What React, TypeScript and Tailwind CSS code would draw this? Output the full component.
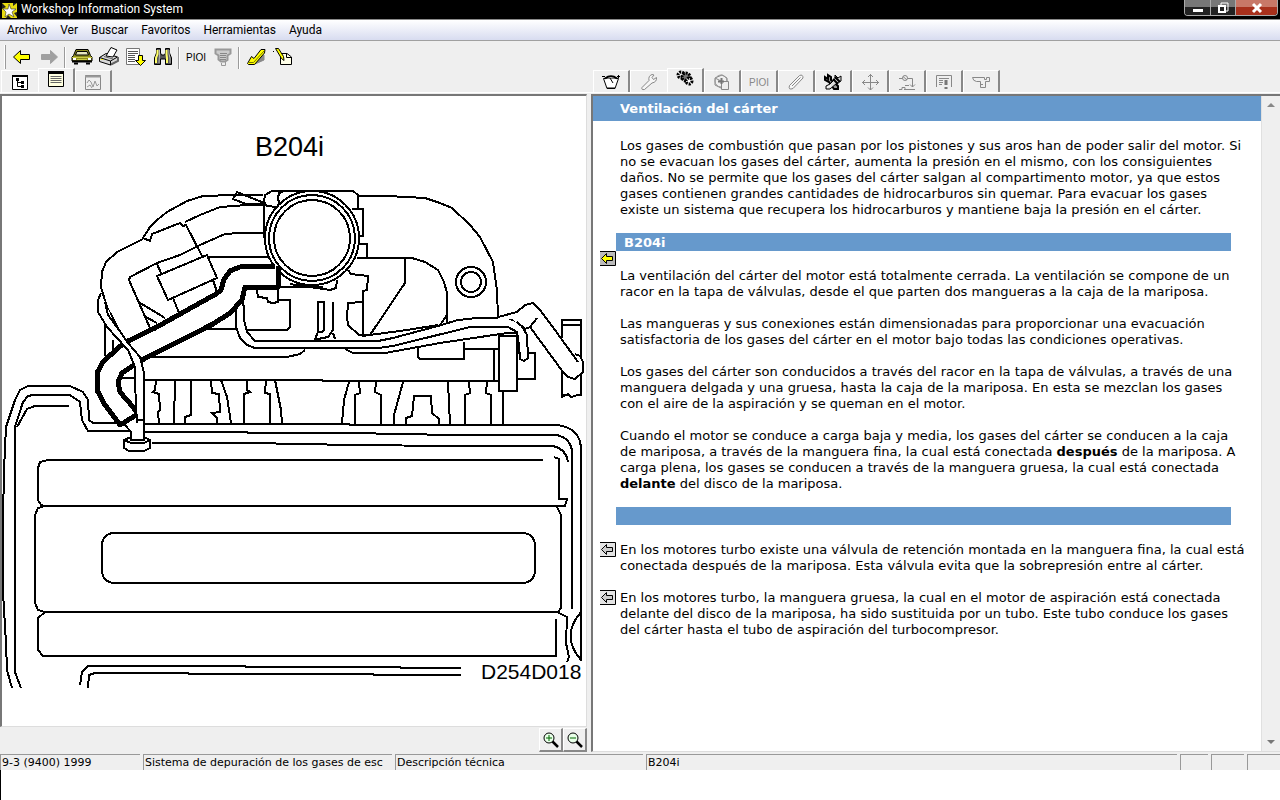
import { useState } from 'react';
import type { ReactNode } from 'react';

interface IconItem {
  title: string;
  icon: ReactNode;
}

const menuItems = ['Archivo', 'Ver', 'Buscar', 'Favoritos', 'Herramientas', 'Ayuda'];

function Icon({ children }: { children: ReactNode }) {
  return (
    <svg viewBox="0 0 22 20" className="h-5 w-[22px] shrink-0" fill="none" stroke="#000" strokeWidth="1">
      {children}
    </svg>
  );
}

function Pioi({ color }: { color: string }) {
  return (
    <Icon>
      <text x="11" y="14" textAnchor="middle" fontSize="10" fill={color} stroke="none" className="font-['Liberation_Sans',sans-serif]">
        PIOI
      </text>
    </Icon>
  );
}

const navTools: IconItem[] = [
  {
    title: 'Atrás',
    icon: (
      <Icon>
        <path d="M2.500 10 9.500 3.500V7.500H18.500V12.500H9.500V16.500Z" fill="#ff0" />
      </Icon>
    ),
  },
  {
    title: 'Adelante',
    icon: (
      <Icon>
        <path d="M19.500 10 12.500 3.500V7.500H3.500V12.500H12.500V16.500Z" fill="#a0a0a0" stroke="#a0a0a0" />
      </Icon>
    ),
  },
];

const docTools: IconItem[] = [
  {
    title: 'Vehículo',
    icon: (
      <Icon>
        <path d="M5 2.500H17L19.500 8.500 21 10V14H1V10L2.500 8.500Z" fill="#8c8c1e" />
        <path d="M6 4.500H16L17.500 8H4.500Z" fill="#e8e8c0" />
        <path d="M1 10.500H21M6 12.500H16" stroke="#cc4" />
        <path d="M1 14.500H21" strokeWidth="2" />
        <path d="M3 16.500H7M15 16.500H19" strokeWidth="2" />
        <path d="M2 12H5M17 12H20" stroke="#fff" strokeWidth="2" />
      </Icon>
    ),
  },
  {
    title: 'Imprimir',
    icon: (
      <Icon>
        <path d="M1.500 10.500 8 6.500 19.500 10V14L12.500 18 1.500 14.500Z" fill="#d8d8d8" />
        <path d="M1.500 10.500 12.500 14 19.500 10M12.500 14V18" />
        <path d="M8 9 13 .5 19 3 15 10Z" fill="#fff" />
        <path d="M6 9.500 15 12" stroke="#666" />
        <path d="M13 17.500 20 14V10" stroke="#666" strokeWidth="2" />
        <path d="M3 12.500H5" stroke="#ff0" />
      </Icon>
    ),
  },
  {
    title: 'Descargar lista',
    icon: (
      <Icon>
        <path d="M1.500 1.500H14.500V17.500H1.500Z" fill="#fff" stroke="#777" />
        <path d="M3 4.500H13M3 6.500H13M3 8.500H10M3 10.500H10M3 12.500H10M3 14.500H10" stroke="#555" />
        <path d="M13.500 8.500H17.500V13.500H20.500L15.500 18.500 10.500 13.500H13.500Z" fill="#ff0" />
      </Icon>
    ),
  },
  {
    title: 'Buscar',
    icon: (
      <Icon>
        <path d="M4.500 1.500H8.500V6L9.500 8H12.500L13.500 6V1.500H17.500V6L19.500 11V17.500H13.500V12H8.500V17.500H2.500V11L4.500 6Z" fill="#555" />
        <path d="M5.500 3V7L4 11V16M14.500 3V7L15 11V16" stroke="#ff6" strokeWidth="2" />
        <path d="M7.500 3V7L7 16M17 3V7L18 11V16" stroke="#bbb" />
      </Icon>
    ),
  },
];

const linkTools: IconItem[] = [
  { title: 'PIOI', icon: <Pioi color="#000" /> },
  {
    title: 'Teléfono',
    icon: (
      <Icon>
        <path d="M3.500 2.500H18.500V6.500L15.500 8.500V13L13 14.500H9L6.500 12.500V8.500L3.500 6.500Z" fill="#ccc" stroke="#999" strokeWidth="2" />
        <path d="M8 6.500H15M8 8.500H14M8 10.500H14M8 12.500H14" stroke="#888" />
        <path d="M13.500 15V18.500H9.500V16" stroke="#999" />
      </Icon>
    ),
  },
];

const noteTools: IconItem[] = [
  {
    title: 'Marcador',
    icon: (
      <Icon>
        <path d="M10 17 19 13V8Z" fill="#888" stroke="#888" />
        <path d="M2.500 16.500 6.500 9.500 9 11.500 16 2.500H20L19.500 6 9.500 17.500H3.500Z" fill="#ff0" />
        <path d="M3.500 15.500H8.500L19 4" stroke="#770" />
      </Icon>
    ),
  },
  {
    title: 'Nota',
    icon: (
      <Icon>
        <path d="M8.500 6.500H15L19.500 10V17.500H8.500Z" fill="#ffffe8" />
        <path d="M14.500 6.500V10.500H19.500" />
        <path d="M3.500 1.500H6.500L11.500 9.500 12 13.500 9.500 11.500Z" fill="#ff0" />
        <path d="M1 4.500H2" />
      </Icon>
    ),
  },
];

const leftTabs: IconItem[] = [
  {
    title: 'Árbol',
    icon: (
      <Icon>
        <path d="M3.500 3.500H18.500V17.500H3.500Z" fill="#fff" />
        <path d="M3 4H19" strokeWidth="2" />
        <path d="M8.500 8V14.500H12M8.500 10.500H12" />
        <path d="M7 7.500H10M12 10.500H15M12 14.500H15" strokeWidth="3" />
      </Icon>
    ),
  },
  {
    title: 'Texto',
    icon: (
      <Icon>
        <path d="M3.500 2.500H18.500V17.500H3.500Z" fill="#ffffe0" />
        <path d="M3 3.500H19" strokeWidth="3" />
        <path d="M5.500 7.500H16.500M5.500 9.500H16.500M5.500 11.500H16.500M5.500 13.500H16.500" stroke="#666" />
      </Icon>
    ),
  },
  {
    title: 'Diagrama',
    icon: (
      <Icon>
        <path d="M3.500 3.500H18.500V17.500H3.500Z" stroke="#888" />
        <path d="M3 4.500H19" stroke="#999" strokeWidth="2" />
        <path d="M5 11 7 8 9 10 11 15 13 9 15 14 17 12M5 15 8 13 10 16" stroke="#999" />
      </Icon>
    ),
  },
];

const rightTabs: IconItem[] = [
  {
    title: 'Datos técnicos',
    icon: (
      <Icon>
        <path d="M3.500 6.500 7 16.500H15L18.500 6.500Z" fill="#fff" />
        <path d="M5 6.500Q11 2 17 6.500" fill="#fff" strokeWidth="2" />
        <path d="M2 4.500H5M17 4.500H20M18.500 3V6M10 6 13 11M7 16H15" />
      </Icon>
    ),
  },
  {
    title: 'Reparación',
    icon: (
      <Icon>
        <path
          d="M4 15.500 11 8.500Q10 4 14 2.500L16 3 14 5.500 15.500 7.500 18.500 5.500Q19 10 14 11L6.500 17.500Q3 18 4 15.500Z"
          fill="#f6f6f6"
          stroke="#888"
        />
      </Icon>
    ),
  },
  {
    title: 'Descripción técnica',
    icon: (
      <Icon>
        <circle cx="7" cy="6" r="3" strokeWidth="3" strokeDasharray="2 1" />
        <circle cx="12" cy="8" r="4" fill="#777" strokeWidth="3" strokeDasharray="2 1" />
        <circle cx="15" cy="12" r="3" fill="#fff" strokeWidth="3" strokeDasharray="2 1" />
      </Icon>
    ),
  },
  {
    title: 'Recambios',
    icon: (
      <Icon>
        <path d="M4 6 11 3 16 6V9M4 6V13L10 16M4 6 10 9" stroke="#888" />
        <circle cx="10" cy="9" r="6" stroke="#999" />
        <path d="M10.500 9.500H17.500V17.500H10.500Z" fill="#eee" stroke="#888" />
        <path d="M7 9.500H13M10.500 6V12" stroke="#777" strokeWidth="2" />
      </Icon>
    ),
  },
  { title: 'Códigos', icon: <Pioi color="#888" /> },
  {
    title: 'Medición',
    icon: (
      <Icon>
        <path d="M4.500 13.500 14.500 3.500Q18 2 18 6L8 16.500Q3 18.500 4.500 13.500Z" fill="#f6f6f6" stroke="#888" />
        <path d="M7 14 15.500 5.500" stroke="#888" />
      </Icon>
    ),
  },
  {
    title: 'Herramientas',
    icon: (
      <Icon>
        <path d="M3 5 6 7V3L9 5V8L16 14V17H12L7 10 3 8Z" fill="#999" strokeWidth="2" />
        <path d="M4 14 8 12 13 7V3L16 6 19 4V9L15 11 8 17 4 17Z" fill="#ddd" />
        <path d="M11 7 16 12M13 5 18 10" strokeWidth="2" />
        <path d="M5 15.500 9 13.500" stroke="#fff" />
      </Icon>
    ),
  },
  {
    title: 'Desplazar',
    icon: (
      <Icon>
        <path d="M11.500 2V18M3 10.500H20M9 5 11.500 2.500 14 5M9 15.500 11.500 18 14 15.500M6 8 3.500 10.500 6 13M17 8 19.500 10.500 17 13" stroke="#888" />
      </Icon>
    ),
  },
  {
    title: 'Esquemas',
    icon: (
      <Icon>
        <circle cx="9" cy="6" r="2.500" stroke="#888" />
        <path d="M3 6.500H6.500M11.500 6.500H16.500V15M14 12.500 16.500 15 19 12.500M9 13.500H13M8 17.500H19M3 17.500H6V15.500H9V17.500M7 4.500 11 8" stroke="#888" />
      </Icon>
    ),
  },
  {
    title: 'Avisos',
    icon: (
      <Icon>
        <path d="M3.500 15V3.500H18.500V15" stroke="#888" />
        <path d="M6 6.500H16M6 8.500H10M6 10.500H10M6 12.500H9" stroke="#888" />
        <path d="M13 8V13M13 15V17" stroke="#777" strokeWidth="3" />
      </Icon>
    ),
  },
  {
    title: 'Boletines',
    icon: (
      <Icon>
        <path d="M2.500 5.500H14.500V7.500H16.500V5.500H19.500V9.500H15.500V15.500H10.500V9.500H6.500Q3 9 2.500 5.500Z" stroke="#888" />
        <path d="M10.500 12.500H13" stroke="#888" />
      </Icon>
    ),
  },
];

function ToolGroup({ items }: { items: IconItem[] }) {
  return (
    <>
      {items.map((item) => (
        <button key={item.title} aria-label={item.title} className="flex h-6 w-[27px] items-center justify-center">
          {item.icon}
        </button>
      ))}
    </>
  );
}

function Separator() {
  return <div className="mx-[2px] h-[22px] w-[2px] border-l border-[#9a9a9a] bg-white" />;
}

interface TabStripProps {
  tabs: IconItem[];
  initial: number;
  className: string;
}

function TabStrip({ tabs, initial, className }: TabStripProps) {
  const [active, setActive] = useState(initial);

  return (
    <div role="tablist" className={`flex h-6 items-end border-b border-white ${className}`}>
      {tabs.map((tab, index) => (
        <button
          key={tab.title}
          role="tab"
          aria-label={tab.title}
          aria-selected={index === active}
          onClick={() => setActive(index)}
          className={`flex w-[37px] items-center justify-center border-t border-l border-white ${
            index === active ? 'h-6 border-r-2 border-r-[#777] pb-1' : 'h-[22px]'
          } ${index === active - 1 ? '' : 'border-r-2 border-r-[#888]'}`}
        >
          {tab.icon}
        </button>
      ))}
    </div>
  );
}

function TitleBar() {
  return (
    <header className="flex h-5 items-start justify-between border-b border-[#8a8a8a] bg-black pl-[2px]">
      <div className="flex items-center gap-1">
        <svg viewBox="0 0 15 16" className="h-4 w-[15px]">
          <path d="M0 1H15V16H0Z" fill="#e8dc10" />
          <path d="M0 1 4 5 0 7ZM11 1 11 4 15 1ZM15 10 12 11 15 15ZM4 16 6 13 9 16Z" fill="#222" />
          <path d="M7 2 9 7 14 7 10 10 12 15 7 12 3 15 4 10 1 7 6 7Z" fill="#fff" stroke="#333" strokeWidth=".6" />
        </svg>
        <h1 className="font-[Roboto,sans-serif] text-[12px] leading-[19px] text-white">Workshop Information System</h1>
      </div>
      <div className="mr-[2px] flex h-4 overflow-hidden rounded-b-[4px] border border-t-0 border-[#aaa]">
        <button aria-label="Minimizar" className="flex w-[25px] items-center justify-center bg-linear-to-b from-[#777] from-50% to-[#222] to-50%">
          <svg viewBox="0 0 12 12" className="size-3">
            <path d="M1 7H11V10H1Z" fill="#fff" />
          </svg>
        </button>
        <button aria-label="Restaurar" className="flex w-[25px] items-center justify-center border-l border-[#aaa] bg-linear-to-b from-[#777] from-50% to-[#222] to-50%">
          <svg viewBox="0 0 12 12" className="size-3" fill="none" stroke="#fff">
            <path d="M4 3V1H11V9H9" />
            <path d="M2 4H8V10H2Z" strokeWidth="2" />
          </svg>
        </button>
        <button aria-label="Cerrar" className="flex w-[42px] items-center justify-center border-l border-[#aaa] bg-linear-to-b from-[#c87868] from-50% to-[#a8301c] to-50%">
          <svg viewBox="0 0 12 12" className="size-3" stroke="#fff" strokeWidth="3">
            <path d="M2 2 10 10M10 2 2 10" />
          </svg>
        </button>
      </div>
    </header>
  );
}

function EngineDrawing() {
  return (
    <svg
      viewBox="2 96 584 630"
      preserveAspectRatio="xMinYMin meet"
      className="block w-full"
      fill="none"
      stroke="#000"
      strokeWidth="2"
      shapeRendering="crispEdges"
      role="img"
      aria-label="B204i"
    >
      {/* intake manifold */}
      <path d="M143 238 150 227 157 220 167 212 187 201 203 196 233 195H263" />
      <path d="M264 203 237 192 233 199 246 204H264" />
      <path d="M185 222 200 215 220 207 247 205H264V238M264 233H240L225 234 200 245 180 255 157 263 130 277 129 280 150 328" />
      <path d="M143 238 150 241 152 234 180 223 183 226 186 225 202 256" />
      <path d="M143 239 117 252 106 262 102 272 101 287 107 307 119 330" />
      <path d="M157 276 207 255 217 278 168 300ZM157 264 161 273M173 298 179 313M213 280 217 292M137 301 165 318M144 316 157 323M209 257H269" />
      <path d="M358 196H387L425 198 440 203 452 208 470 225 480 237 493 262 497 290 498 318" />
      <path d="M357 258H412L425 262 438 270 444 282 447 293V323M405 258V283L370 335M447 315 440 325" />
      <circle cx="471" cy="282" r="15" />
      <circle cx="471" cy="282" r="10" />
      {/* throttle body */}
      <path d="M277 207 267 206 264 202 265 195 272 191H353L358 195V209M283 192 279 193 278 198 279 203 277 207" />
      <path d="M352 209H363V236H359M359 244H367V258" />
      <path d="M278 287H323M290 284 330 290 336 288 337 280M348 270 351 274 368 276 367 290 363 291V302L348 303 347 317 348 325 359 335H370M363 302V335" />
      <circle cx="312" cy="238" r="47" fill="#fff" />
      <circle cx="312" cy="238" r="43" />
      <circle cx="312" cy="238" r="38" />
      <path d="M257 290 258 297 267 298 268 302 273 303 278 302 279 300H290V327L287 330H247L243 323V300M278 288V301" />
      <path d="M318 339 315 339 318 332V302H324V330L322 332H318M333 302V330L328 337 318 339M333 333 335 339" />
      {/* fuel rail */}
      <path d="M152 357H287L300 354 305 350M203 329H236M143 380H322L323 381H499M120 378H135" />
      <path d="M418 348V357L420 359H464V342M464 349H499M494 350V381M499 336H517V391H499ZM503 391V424" />
      <path d="M517 353H535V379H517" />
      <path
        d="M236 308V327L240 338 247 345 255 348H378L393 346 470 327H508L517 332 519 345 520 359 524 361 528 358 527 335 520 323 508 318H477L458 320 438 326 393 338 378 341H255L247 332 244 320V305"
        fill="#fff"
      />
      <path d="M362 336 407 330 438 325M345 349 353 353H385L440 343 507 333H517" />
      {/* cylinder head supports */}
      <path d="M156 380 155 390 153 392 159 394 160 410 158 412 159 423M175 380 174 423M191 380V415L185 417V423" />
      <path d="M211 380 212 393 219 394 220 412 212 413 217 418V423M221 380 227 397 231 423M247 380V390L250 392 244 394V423" />
      <path d="M266 380 265 393 270 394V423M275 380 281 410 282 423" />
      <path d="M349 382 344 400 342 423M359 382 360 393 355 395V424M376 382 375 392 381 395V424M403 382 394 415V424" />
      <path d="M406 424V418L412 416 414 396H431L432 413 439 419V424M448 382 450 424M469 382 470 393 465 395V424M487 382 486 393 491 395V424" />
      {/* pipe and hose at the right edge */}
      <path d="M561 320H582M562 325H580M562 320V397L568 394 571 397 578 395H581V320M562 395H570" />
      <path
        d="M498 316 517 312 525 305 533 303 540 310 555 330 577 354 583 360V372L575 379 568 377 563 372 530 327 520 325 512 319H498"
        fill="#fff"
        stroke="none"
      />
      <path d="M498 317 517 312 525 305 533 303 540 310 555 330 578 362M575 354 580 356 583 362V372L575 379 568 377 563 372 530 327 537 318M530 327 525 329 517 322" />
      {/* valve cover */}
      <path d="M12 688 7 670 6 643 3 592V520L4 470 6 427 15 400 20 390 28 386H70L83 392 88 400 89 420 93 423H118" />
      <path d="M21 688 15 672V427L23 402 28 396 33 395H70L80 402 82 420 88 431H130M17 427 27 409 35 406H69" />
      <path d="M144 424H349L350 425H557Q581 428 581 450V661" />
      <path d="M144 432H247L248 433H350L452 435H557Q572 439 572 453V609M152 443H250L352 445 452 446H553Q566 449 568 462" />
      <path d="M543 460H48L40 462 38 468V500L41 505 45 506H560M554 457 559 459V499H567L565 506H558" />
      <path d="M45 506 38 508 35 515V603L38 610 45 612H558L561 608V515L557 507" />
      <rect x="102" y="533" width="433" height="50" rx="12" />
      <path d="M45 612 38 618V650L43 656H556V619M557 612 567 617 566 643 569 657 567 662M581 612Q560 636 581 660" />
      <path d="M80 685 82 672 88 666H245L246 667H400L401 668H461M88 688 89 675 95 673H188L189 674H373L374 675H461" />
      {/* thick crankcase hose */}
      <path
        d="M275 266 240 267 230 271 224 279 221 290 216 294 155 328 126 342 118 348 103 362 97 373V390L105 405 120 425 138 414 133 407 120 392 118 382 122 373 140 361 213 324 230 313 242 300 245 287H278V266"
        fill="#fff"
        strokeWidth="5"
        strokeLinejoin="round"
      />
      {/* thin hose running over it */}
      <path d="M98 300V312L107 327 128 350 135 367V383L137 423 131 432V438H144V373L140 357 128 343 113 320 107 307 101 293Z" fill="#fff" stroke="none" />
      <path d="M101 293 98 300V312L107 327 128 350 135 367V383L137 423M105 302 108 315 119 330 128 343 140 357 144 373V438M137 420H144M125 425 131 432V438" />
      <path d="M105 325V356M113 340V350" />
      <path d="M124 440 131 437V440H144V437L150 440V448L144 451H129L124 448Z" fill="#fff" />
      <path d="M124 440 131 443H144L150 440" />
      <g fill="#000" stroke="none" className="font-['Liberation_Sans',sans-serif]">
        <text x="255" y="156" fontSize="27">
          B204i
        </text>
        <text x="481" y="679" fontSize="21">
          D254D018
        </text>
      </g>
    </svg>
  );
}

function ZoomButton({ label, sign }: { label: string; sign: string }) {
  return (
    <button aria-label={label} className="flex size-6 items-center justify-center border-t border-r-2 border-b-2 border-l border-t-white border-r-[#888] border-b-[#888] border-l-white">
      <svg viewBox="0 0 18 18" className="size-[18px]" fill="none" stroke="#000">
        <circle cx="7" cy="7" r="5" fill="#e8ffe8" />
        <path d={sign} stroke="#060" />
        <path d="M10.500 10.500 16 16" strokeWidth="2.500" />
      </svg>
    </button>
  );
}

function RefButton({ active = false }: { active?: boolean }) {
  return (
    <button aria-label="Mostrar figura" className="h-[15px] w-4">
      <svg viewBox="0 0 16 15" className="h-[15px] w-4" stroke="#000">
        <path d="M0 .5H15.500V14.500H0" fill={active ? '#bbb' : '#e4e4e4'} />
        <path d="M1.500 7.500 6.500 2.500V5.500H12.500V9.500H6.500V12.500Z" fill={active ? '#ff0' : '#ccc'} />
      </svg>
    </button>
  );
}

function SectionBar({ children }: { children?: ReactNode }) {
  return (
    <h3 className="mt-[15px] mr-[30px] ml-4 h-[18px] bg-[#6699cc] pl-2 leading-[19px] font-bold text-white">{children}</h3>
  );
}

function Article() {
  return (
    <article className="min-w-0 flex-1 bg-white font-['DejaVu_Sans',sans-serif] text-[13px] leading-4 text-black">
      <h2 className="h-[25px] bg-[#6699cc] pl-[27px] leading-[25px] font-bold text-white">Ventilación del cárter</h2>
      <div className="pt-[17px] pl-[7px]">
        <p className="pl-5">
          Los gases de combustión que pasan por los pistones y sus aros han de poder salir del motor. Si
          <br />
          no se evacuan los gases del cárter, aumenta la presión en el mismo, con los consiguientes
          <br />
          daños. No se permite que los gases del cárter salgan al compartimento motor, ya que estos
          <br />
          gases contienen grandes cantidades de hidrocarburos sin quemar. Para evacuar los gases
          <br />
          existe un sistema que recupera los hidrocarburos y mantiene baja la presión en el cárter.
        </p>
        <SectionBar>B204i</SectionBar>
        <div className="grid grid-cols-[20px_1fr] items-start">
          <RefButton active />
          <div className="space-y-4 pt-[17px]">
            <p>
              La ventilación del cárter del motor está totalmente cerrada. La ventilación se compone de un
              <br />
              racor en la tapa de válvulas, desde el que parten dos mangueras a la caja de la mariposa.
            </p>
            <p>
              Las mangueras y sus conexiones están dimensionadas para proporcionar una evacuación
              <br />
              satisfactoria de los gases del cárter en el motor bajo todas las condiciones operativas.
            </p>
            <p>
              Los gases del cárter son conducidos a través del racor en la tapa de válvulas, a través de una
              <br />
              manguera delgada y una gruesa, hasta la caja de la mariposa. En esta se mezclan los gases
              <br />
              con el aire de la aspiración y se queman en el motor.
            </p>
            <p>
              Cuando el motor se conduce a carga baja y media, los gases del cárter se conducen a la caja
              <br />
              de mariposa, a través de la manguera fina, la cual está conectada <b>después</b> de la mariposa. A
              <br />
              carga plena, los gases se conducen a través de la manguera gruesa, la cual está conectada
              <br />
              <b>delante</b> del disco de la mariposa.
            </p>
          </div>
        </div>
        <SectionBar />
        <div className="mt-[17px] grid grid-cols-[20px_1fr] items-start gap-y-4">
          <RefButton />
          <p>
            En los motores turbo existe una válvula de retención montada en la manguera fina, la cual está
            <br />
            conectada después de la mariposa. Esta válvula evita que la sobrepresión entre al cárter.
          </p>
          <RefButton />
          <p>
            En los motores turbo, la manguera gruesa, la cual en el motor de aspiración está conectada
            <br />
            delante del disco de la mariposa, ha sido sustituida por un tubo. Este tubo conduce los gases
            <br />
            del cárter hasta el tubo de aspiración del turbocompresor.
          </p>
        </div>
      </div>
    </article>
  );
}

function ScrollBar() {
  return (
    <div className="flex w-[19px] flex-col justify-between border-l border-[#e0e0e0] bg-[#efefef]">
      <button aria-label="Subir" className="flex h-[18px] items-center justify-center">
        <svg viewBox="0 0 8 4" className="h-1 w-2">
          <path d="M0 4 4 0 8 4Z" fill="#888" />
        </svg>
      </button>
      <button aria-label="Bajar" className="flex h-[18px] items-center justify-center">
        <svg viewBox="0 0 8 4" className="h-1 w-2">
          <path d="M0 0 4 4 8 0Z" fill="#777" />
        </svg>
      </button>
    </div>
  );
}

const statusCells = ['9-3 (9400) 1999', 'Sistema de depuración de los gases de esc', 'Descripción técnica', 'B204i', '', '', ''];

export default function App() {
  return (
    <div className="flex min-h-screen flex-col bg-white">
      <div className="flex flex-1 flex-col bg-[#efefef]">
        <TitleBar />
        <nav className="flex h-[21px] gap-[13px] border-b border-[#a0a0a0] bg-linear-to-b from-white to-[#d8dcf0] pl-[7px] font-[Roboto,sans-serif] text-[12px] leading-5 text-black">
          {menuItems.map((item) => (
            <button key={item}>{item}</button>
          ))}
        </nav>
        <div className="flex h-7 items-end pl-1">
          <div className="mr-[2px] h-6 w-[2px] border-r border-[#9a9a9a] bg-white" />
          <ToolGroup items={navTools} />
          <Separator />
          <ToolGroup items={docTools} />
          <Separator />
          <ToolGroup items={linkTools} />
          <Separator />
          <ToolGroup items={noteTools} />
        </div>
        <main className="grid flex-1 grid-cols-[59fr_69fr]">
          <section className="flex flex-col">
            <TabStrip tabs={leftTabs} initial={1} className="pl-px" />
            <div className="mt-px mr-[3px] flex-1 border-t-2 border-r border-b border-l-2 border-t-[#777] border-r-[#ddd] border-b-[#ddd] border-l-[#777] bg-white">
              <EngineDrawing />
            </div>
            <div className="mr-[3px] flex h-[25px] justify-end pt-px">
              <ZoomButton label="Ampliar" sign="M4 7H10M7 4V10" />
              <ZoomButton label="Reducir" sign="M4 7H10" />
            </div>
          </section>
          <section className="flex flex-col">
            <TabStrip tabs={rightTabs} initial={2} className="pl-[3px]" />
            <div className="mt-px ml-px flex flex-1 border-t-2 border-b border-l-2 border-t-[#777] border-b-[#ddd] border-l-[#777]">
              <Article />
              <ScrollBar />
            </div>
          </section>
        </main>
        <footer className="mt-[2px] grid h-4 grid-cols-[140px_249px_248px_1fr_28px_33px_33px] gap-[3px] font-['DejaVu_Sans',sans-serif] text-[11px] leading-[15px] text-black">
          {statusCells.map((cell, index) => (
            <div key={index} className="overflow-hidden border-t border-l border-[#999] pl-px whitespace-nowrap">
              {cell}
            </div>
          ))}
        </footer>
      </div>
      <div className="h-[31px] border-l border-black" />
    </div>
  );
}
